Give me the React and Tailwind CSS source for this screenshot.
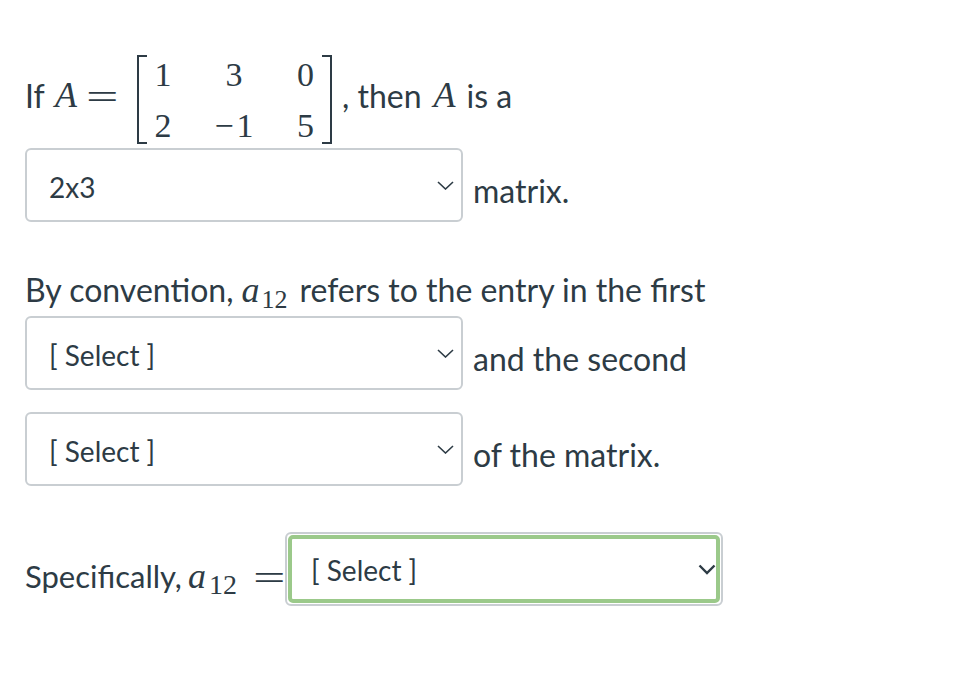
import React from "react";

const lato = { fontFamily: "Lato, 'Liberation Sans', sans-serif" };
const serif = { fontFamily: "'Liberation Serif', 'DejaVu Serif', serif" };

function Chevron({ big }) {
  if (big) {
    return (
      <svg width="18" height="11" viewBox="0 0 18 11" className="shrink-0">
        <path d="M1.5 1.5 L9 9 L16.5 1.5" fill="none" stroke="#2d3b45" strokeWidth="2.4" />
      </svg>
    );
  }
  return (
    <svg width="17" height="9" viewBox="0 0 17 9" className="shrink-0">
      <path d="M1 1 L8.5 8 L16 1" fill="none" stroke="#2d3b45" strokeWidth="1.6" />
    </svg>
  );
}

function SelectBox({ value }) {
  return (
    <div className="w-[438px] h-[74px] shrink-0 border-2 border-[#c9ced2] rounded-[6px] bg-white flex items-center pl-[22px] pr-[7px]">
      <span className="flex-1 text-[28px] leading-none pt-[4px]">{value}</span>
      <Chevron />
    </div>
  );
}

function Sub({ base, big }) {
  return (
    <span className="inline-flex items-baseline" style={serif}>
      <span className="italic text-[36px] leading-none">{base}</span>
      <span className={(big ? "text-[28px] ml-[3px]" : "text-[26px] ml-[2px]") + " leading-none relative top-[6px]"}>12</span>
    </span>
  );
}

function Cell({ children }) {
  return (
    <div className="h-[34px] flex items-center justify-center text-[34px] leading-none" style={serif}>
      {children}
    </div>
  );
}

function Equals() {
  return (
    <span className="w-[30px] flex justify-center shrink-0">
      <span className="inline-block text-[36px] leading-none scale-x-[1.6]" style={serif}>=</span>
    </span>
  );
}

function Matrix() {
  return (
    <div className="flex h-[89px]">
      <div className="w-[10px] border-l-2 border-t-2 border-b-2 border-[#2d3b45]" />
      <div className="grid grid-cols-[32px_110px_33px] grid-rows-[34px_34px] gap-y-[17px] pt-[3px]">
        <Cell>1</Cell>
        <Cell>3</Cell>
        <Cell>0</Cell>
        <Cell>2</Cell>
        <Cell>
          <span className="mr-[3px]">−</span>1
        </Cell>
        <Cell>5</Cell>
      </div>
      <div className="w-[10px] border-r-2 border-t-2 border-b-2 border-[#2d3b45]" />
    </div>
  );
}

export default function App() {
  return (
    <div className="min-h-screen bg-white text-[#2d3b45] pl-[25px] pt-[55px]" style={lato}>
      {/* line 1 */}
      <div className="flex items-start h-[91px]">
        <span className="w-[30px] shrink-0 text-[32px] leading-none mt-[25px]">If</span>
        <span className="w-[32px] shrink-0 italic text-[36px] leading-none mt-[22px]" style={serif}>A</span>
        <span className="mt-[24px]">
          <Equals />
        </span>
        <div className="ml-[20px]">
          <Matrix />
        </div>
        <span className="text-[32px] leading-none mt-[25px] ml-[10px]">, then</span>
        <span className="w-[24px] shrink-0 italic text-[36px] leading-none mt-[22px] ml-[12px]" style={serif}>A</span>
        <span className="text-[32px] leading-none mt-[25px] ml-[9px]">is a</span>
      </div>

      {/* line 2 */}
      <div className="flex items-start mt-[2px]">
        <SelectBox value="2x3" />
        <span className="text-[32px] leading-none mt-[27px] ml-[10px]">matrix.</span>
      </div>

      {/* line 3 */}
      <div className="flex items-baseline mt-[50px] h-[32px] text-[32px] leading-none">
        <span>By convention,</span>
        <span className="ml-[8px]">
          <Sub base="a" />
        </span>
        <span className="ml-[12px]">refers to the entry in the first</span>
      </div>

      <div className="flex items-start mt-[12px]">
        <SelectBox value="[ Select ]" />
        <span className="text-[32px] leading-none mt-[27px] ml-[10px]">and the second</span>
      </div>

      <div className="flex items-start mt-[22px]">
        <SelectBox value="[ Select ]" />
        <span className="text-[32px] leading-none mt-[27px] ml-[10px]">of the matrix.</span>
      </div>

      {/* line 4 */}
      <div className="flex items-start mt-[46px]">
        <div className="flex items-baseline mt-[26px] text-[31px] leading-none w-[229px] shrink-0">
          <span>Specifically,</span>
          <span className="ml-[6px]">
            <Sub base="a" big />
          </span>
        </div>
        <span className="mt-[28px]">
          <Equals />
        </span>
        <div className="ml-[1px] w-[438px] h-[74px] shrink-0 border-2 border-[#c9ced2] rounded-[6px] p-[1px] flex">
          <div className="flex-1 border-4 border-[#9bc98a] rounded-[5px] flex items-center pl-[19px] pr-0">
            <span className="flex-1 text-[28px] leading-none pt-[2px]">[ Select ]</span>
            <Chevron big />
          </div>
        </div>
      </div>
    </div>
  );
}
